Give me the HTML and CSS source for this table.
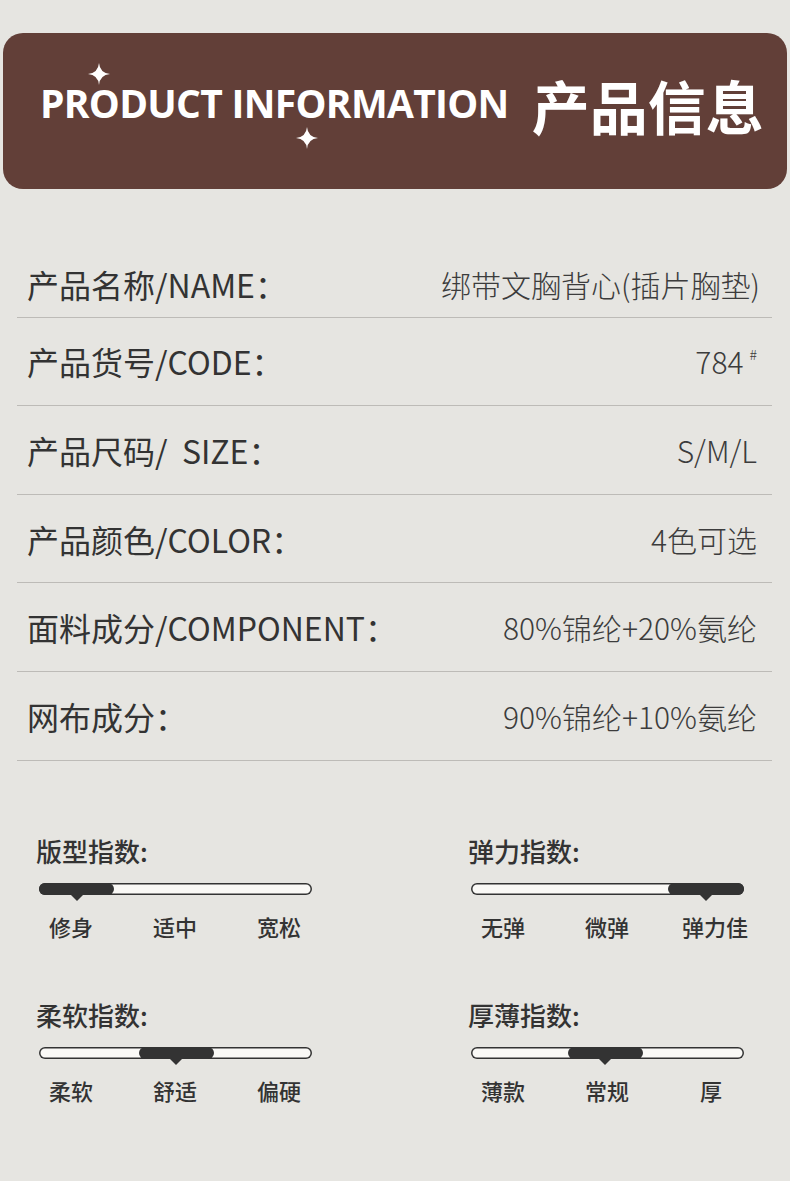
FILE: index.html
```html
<!DOCTYPE html>
<html lang="zh-CN">
<head>
    <meta charset="UTF-8">
    <title>产品信息</title>
    <link rel="stylesheet" href="styles.css">
</head>
<body>
    <header class="banner">
        <div class="banner-en">
            <svg class="spark spark-top" viewBox="0 0 24 24"><path d="M12 0 Q13 11 24 12 Q13 13 12 24 Q11 13 0 12 Q11 11 12 0Z"/></svg>
            PRODUCT INFORMATION
            <svg class="spark spark-bottom" viewBox="0 0 24 24"><path d="M12 0 Q13 11 24 12 Q13 13 12 24 Q11 13 0 12 Q11 11 12 0Z"/></svg>
        </div>
        <div class="banner-cn">产品信息</div>
    </header>

    <section class="specs">
        <div class="spec-row">
            <span class="spec-name">产品名称/NAME：</span>
            <span class="spec-value">绑带文胸背心(插片胸垫)</span>
        </div>
        <div class="spec-row">
            <span class="spec-name">产品货号/CODE：</span>
            <span class="spec-value">784<sup class="mark">#</sup></span>
        </div>
        <div class="spec-row">
            <span class="spec-name">产品尺码/&nbsp;&nbsp;SIZE：</span>
            <span class="spec-value">S/M/L</span>
        </div>
        <div class="spec-row">
            <span class="spec-name">产品颜色/COLOR：</span>
            <span class="spec-value">4色可选</span>
        </div>
        <div class="spec-row">
            <span class="spec-name">面料成分/COMPONENT：</span>
            <span class="spec-value">80%锦纶+20%氨纶</span>
        </div>
        <div class="spec-row">
            <span class="spec-name">网布成分：</span>
            <span class="spec-value">90%锦纶+10%氨纶</span>
        </div>
    </section>

    <section class="indexes">
        <div class="index">
            <div class="index-title">版型指数:</div>
            <div class="track"><div class="fill" style="left:0%;width:27.5%"></div></div>
            <div class="ticks"><span>修身</span><span>适中</span><span>宽松</span></div>
        </div>
        <div class="index">
            <div class="index-title">弹力指数:</div>
            <div class="track"><div class="fill" style="left:72.2%;width:27.8%"></div></div>
            <div class="ticks"><span>无弹</span><span>微弹</span><span class="tick-wide">弹力佳</span></div>
        </div>
        <div class="index">
            <div class="index-title">柔软指数:</div>
            <div class="track"><div class="fill" style="left:36.6%;width:27.5%"></div></div>
            <div class="ticks"><span>柔软</span><span>舒适</span><span>偏硬</span></div>
        </div>
        <div class="index">
            <div class="index-title">厚薄指数:</div>
            <div class="track"><div class="fill" style="left:35.5%;width:27.5%"></div></div>
            <div class="ticks"><span>薄款</span><span>常规</span><span>厚</span></div>
        </div>
    </section>
</body>
</html>
```

FILE: styles.css
```css
body {
    margin: 0;
    background: #e6e5e1;
    font-family: "Noto Sans CJK SC", "Noto Sans", sans-serif;
    color: #333;
}

/* top banner */
.banner {
    margin: 33px 3px 0;
    height: 156px;
    box-sizing: border-box;
    padding-left: 37px;
    display: flex;
    align-items: center;
    background: #623f38;
    border-radius: 20px;
    color: #fff;
}
.banner-en {
    position: relative;
    font-family: "Open Sans", sans-serif;
    font-weight: 700;
    font-size: 39px;
    line-height: 1;
    letter-spacing: -0.7px;
    margin-bottom: 18px;
    white-space: nowrap;
}
.spark {
    position: absolute;
    width: 22px;
    height: 22px;
    fill: #fff;
}
.spark-top {
    left: 48px;
    top: -20px;
}
.spark-bottom {
    left: 256px;
    top: 44px;
}
.banner-cn {
    font-size: 58px;
    font-weight: 700;
    line-height: 1;
    margin-left: 23px;
    margin-bottom: 12px;
}

/* spec table */
.specs {
    margin: 40px 18px 0 17px;
}
.spec-row {
    height: 88.6px;
    box-sizing: border-box;
    padding: 0 15px 0 10px;
    display: flex;
    justify-content: space-between;
    align-items: center;
    border-bottom: 1px solid #bdbbb7;
}
.spec-row:first-child {
    padding-top: 22px;
    padding-right: 12px;
}
.spec-name {
    font-size: 32px;
    line-height: 1;
    color: #333;
}
.spec-value {
    font-size: 30px;
    font-weight: 300;
    line-height: 1;
    color: #3c3c3c;
}
.mark {
    font-size: 14px;
    margin-left: 6px;
    vertical-align: 14px;
}

/* index sliders */
.indexes {
    display: grid;
    grid-template-columns: 432px 1fr;
    row-gap: 58px;
    padding-left: 36px;
    margin-top: 74px;
}
.index-title {
    font-size: 26px;
    font-weight: 500;
    line-height: 31px;
}
.track {
    position: relative;
    width: 273px;
    height: 12px;
    margin: 17px 0 0 3px;
    border-radius: 6px;
    background: #faf9f6;
    box-shadow: inset 0 0 0 1.5px #333;
}
.fill {
    position: absolute;
    top: 0;
    bottom: 0;
    border-radius: 6px;
    background: #333;
}
.fill::after {
    content: "";
    position: absolute;
    left: 50%;
    top: 100%;
    margin-left: -6px;
    border-left: 6px solid transparent;
    border-right: 6px solid transparent;
    border-top: 6px solid #333;
}
.ticks {
    display: grid;
    grid-template-columns: repeat(3, 104px);
    margin: 16px 0 0 -17px;
    font-size: 22px;
    font-weight: 500;
    line-height: 30px;
    text-align: center;
}
.tick-wide {
    margin-left: 8px;
    white-space: nowrap;
}
```
